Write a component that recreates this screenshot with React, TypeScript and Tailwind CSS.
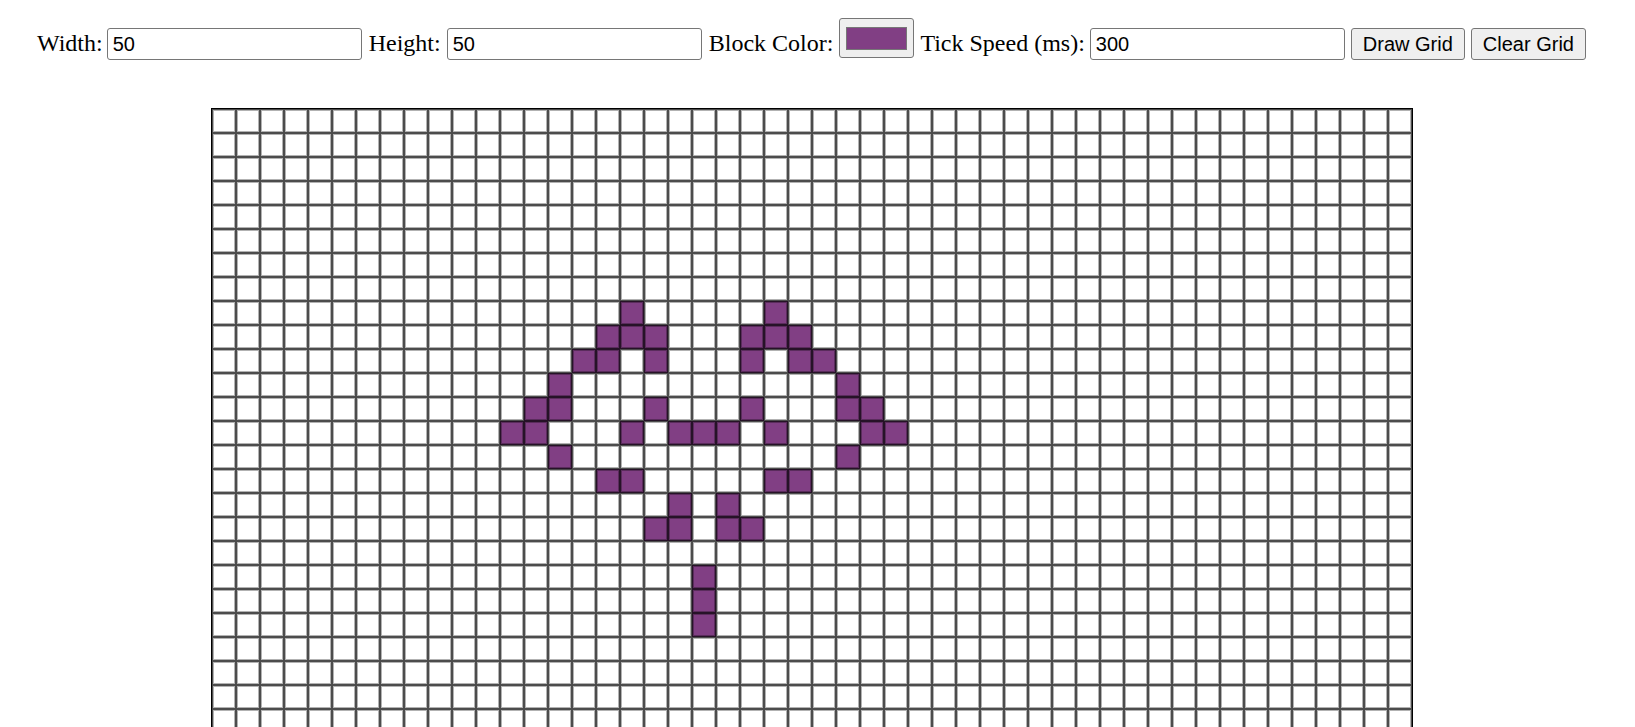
import { useState } from 'react';

// Starting pattern, as [row, col] pairs
const initialCells: [number, number][] = [
  [8, 17], [8, 23],
  [9, 16], [9, 17], [9, 18], [9, 22], [9, 23], [9, 24],
  [10, 15], [10, 16], [10, 18], [10, 22], [10, 24], [10, 25],
  [11, 14], [11, 26],
  [12, 13], [12, 14], [12, 18], [12, 22], [12, 26], [12, 27],
  [13, 12], [13, 13], [13, 17], [13, 19], [13, 20], [13, 21], [13, 23], [13, 27], [13, 28],
  [14, 14], [14, 26],
  [15, 16], [15, 17], [15, 23], [15, 24],
  [16, 19], [16, 21],
  [17, 18], [17, 19], [17, 21], [17, 22],
  [19, 20], [20, 20], [21, 20],
];

const labelClass = "mt-[11px] h-[28px] text-[24px] leading-[28px] text-black whitespace-nowrap font-['Liberation_Serif','Times_New_Roman',serif]";
const inputClass =
  "mt-[10px] h-[32px] w-[255px] rounded-[3px] border border-[#767676] bg-white pl-[5px] text-[20px] text-black outline-none font-['Liberation_Sans',Arial,sans-serif]";
const buttonClass =
  "mt-[10px] h-[32px] rounded-[3px] border border-[#767676] bg-[#efefef] px-[11px] text-[20px] text-black font-['Liberation_Sans',Arial,sans-serif]";

export default function App() {
  const [width, setWidth] = useState('50');
  const [height, setHeight] = useState('50');
  const [color] = useState('#813f84');
  const [tick, setTick] = useState('300');
  const [size, setSize] = useState({ w: 50, h: 50 });
  const [cells, setCells] = useState<Set<string>>(
    () => new Set(initialCells.map(([r, c]) => `${r}-${c}`)),
  );

  const toggle = (key: string) => {
    setCells((prev) => {
      const next = new Set(prev);
      if (next.has(key)) next.delete(key);
      else next.add(key);
      return next;
    });
  };

  const drawGrid = () => {
    setSize({ w: Number(width) || 50, h: Number(height) || 50 });
  };

  return (
    <div className="h-screen overflow-hidden bg-white">
      <div className="flex items-start gap-[6px] pl-[37px] pt-[18px]">
        <span className={`${labelClass} -mr-[2px]`}>Width:</span>
        <input className={inputClass} value={width} onChange={(e) => setWidth(e.target.value)} />
        <span className={`${labelClass} ml-[1px]`}>Height:</span>
        <input className={inputClass} value={height} onChange={(e) => setHeight(e.target.value)} />
        <span className={`${labelClass} ml-[1px]`}>Block Color:</span>
        <button className="h-[40px] w-[75px] rounded-[3px] border border-[#767676] bg-[#efefef] pl-[6px] pr-[6px] pt-[8px] pb-[7px]">
          <span className="block h-full w-full border border-[#777777]" style={{ backgroundColor: color }} />
        </button>
        <span className={labelClass}>Tick Speed (ms):</span>
        <input className={`${inputClass} -ml-[1px]`} value={tick} onChange={(e) => setTick(e.target.value)} />
        <button className={buttonClass} onClick={drawGrid}>
          Draw Grid
        </button>
        <button className={buttonClass} onClick={() => setCells(new Set())}>
          Clear Grid
        </button>
      </div>

      <div className="ml-[211px] mt-[48px] w-fit border border-black">
        {Array.from({ length: size.h }).map((_, r) => (
          <div key={r} className="flex">
            {Array.from({ length: size.w }).map((_, c) => {
              const key = `${r}-${c}`;
              const on = cells.has(key);
              return (
                <div
                  key={c}
                  onClick={() => toggle(key)}
                  className="h-[24px] w-[24px] border border-black/70 shadow-[inset_0_0_0_1px_rgba(0,0,0,0.3)]"
                  style={{ backgroundColor: on ? color : '#ffffff' }}
                />
              );
            })}
          </div>
        ))}
      </div>
    </div>
  );
}
